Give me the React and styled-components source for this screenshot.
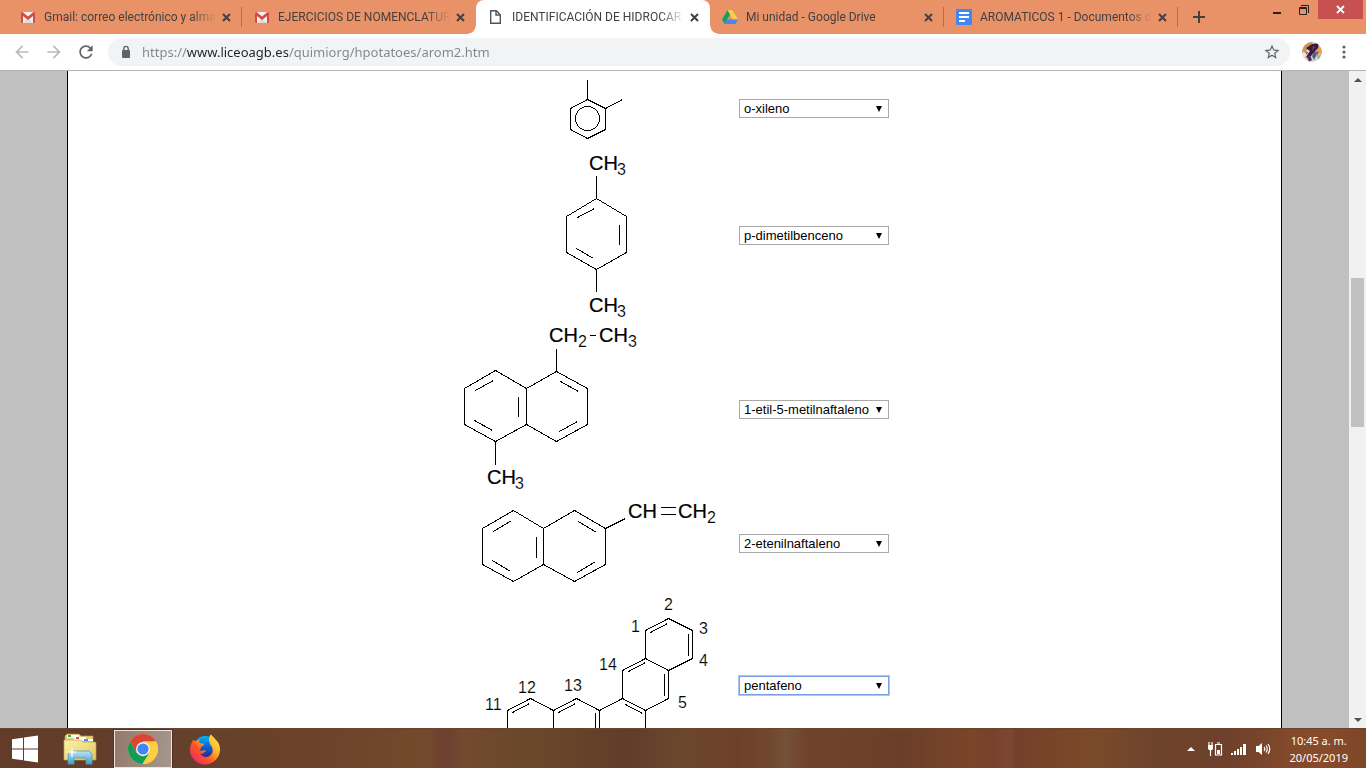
import React from "react";
import styled, { createGlobalStyle, css } from "styled-components";

const UI_FONT = '"Noto Sans", "Open Sans", sans-serif';
const TAB_FONT = 'Roboto, "Noto Sans", sans-serif';
const PAGE_FONT = '"Liberation Sans", Arial, sans-serif';

const GlobalStyle = createGlobalStyle`
  *, *::before, *::after { box-sizing: border-box; }
  body { margin: 0; background: #fff; font-family: ${PAGE_FONT}; }
  button { border: 0; padding: 0; margin: 0; background: none; color: inherit; font: inherit; cursor: pointer; }
  svg { display: block; flex: none; }
`;

const Screen = styled.div`
  display: flex;
  flex-direction: column;
  height: 100vh;
  overflow: hidden;
`;

/* ---------- tab strip ---------- */

const TabStrip = styled.header`
  display: flex;
  flex: none;
  height: 34px;
  padding-left: 8px;
  background: #e99167;
  color: #45403f;
  font: 12px/16px ${TAB_FONT};
`;

const Tab = styled.div`
  display: flex;
  align-items: center;
  flex: 0 1 234px;
  min-width: 0;
  height: 34px;
  padding: 0 8px 0 12px;
  ${(p) =>
    p.$divider &&
    css`
      background: linear-gradient(#a9705a, #a9705a) right center / 1px 20px no-repeat;
    `}
  ${(p) =>
    p.$active &&
    css`
      position: relative;
      background: #fff;
      border-radius: 8px 8px 0 0;
      &::before,
      &::after {
        content: "";
        position: absolute;
        bottom: 0;
        width: 8px;
        height: 8px;
      }
      &::before {
        left: -8px;
        background: radial-gradient(circle at 0 0, transparent 7px, #fff 8px);
      }
      &::after {
        right: -8px;
        background: radial-gradient(circle at 100% 0, transparent 7px, #fff 8px);
      }
    `}
`;

const TabButton = styled.button`
  display: flex;
  align-items: center;
  gap: 8px;
  flex: 1;
  min-width: 0;
  text-align: left;
`;

const TabTitle = styled.span`
  flex: 1;
  overflow: hidden;
  white-space: nowrap;
  mask-image: linear-gradient(90deg, #000 calc(100% - 26px), transparent calc(100% - 2px));
`;

const TabClose = styled.button`
  display: grid;
  place-items: center;
  width: 16px;
  height: 16px;
`;

const NewTab = styled.button`
  display: grid;
  place-items: center;
  width: 28px;
  margin-left: 7px;
`;

const WindowControls = styled.div`
  display: flex;
  align-items: flex-start;
  gap: 1px;
  margin-left: auto;
  padding-right: 3px;
  color: #222;
`;

const WindowButton = styled.button`
  display: grid;
  place-items: center;
  width: ${(p) => (p.$close ? 45 : 26)}px;
  height: 19px;
  ${(p) => p.$close && "background: #c75050; color: #fff;"}
`;

/* ---------- toolbar ---------- */

const Toolbar = styled.nav`
  display: flex;
  align-items: center;
  flex: none;
  height: 37px;
  padding: 0 12px;
  gap: 12px;
  background: #fff;
  border-bottom: 1px solid #b4b4b4;
  color: #5f6368;
`;

const ToolButton = styled.button`
  display: grid;
  place-items: center;
  width: 20px;
  height: 20px;
  ${(p) => p.$dim && "color: #bababa;"}
`;

const AddressBar = styled.form`
  display: flex;
  align-items: center;
  flex: 1;
  height: 28px;
  padding: 0 8px 0 12px;
  gap: 10px;
  border-radius: 14px;
  background: #f1f3f4;
`;

const AddressInput = styled.input`
  flex: 1;
  min-width: 0;
  height: 24px;
  padding: 0;
  border: 0;
  outline: 0;
  font: 13px/24px ${UI_FONT};
  color: #80868b;
  background: linear-gradient(90deg, #80868b 45px, #202124 45px 146px, #80868b 146px);
  -webkit-background-clip: text;
  background-clip: text;
  -webkit-text-fill-color: transparent;
`;

/* ---------- page ---------- */

const Viewport = styled.div`
  display: flex;
  flex: 1;
  min-height: 0;
  background: #c0c0c0;
`;

const Page = styled.main`
  flex: 1;
  min-width: 0;
  margin: 0 5%;
  overflow: hidden;
  background: #fff;
  border: solid #000;
  border-width: 0 1px;
`;

const PageArea = styled.div`
  display: flex;
  flex: 1;
  min-width: 0;
`;

const Exercise = styled.table`
  width: 435px;
  margin: -4px auto 0;
  table-layout: fixed;
  border-collapse: collapse;
  td {
    padding: 0;
    vertical-align: middle;
  }
  td:first-child {
    width: 282px;
  }
`;

const Drawing = styled.svg`
  width: 282px;
  height: ${(p) => p.$height}px;
  fill: none;
  stroke: #000;
  stroke-width: 1px;
  shape-rendering: crispEdges;
  text {
    fill: #000;
    stroke: #fff;
    stroke-width: 0.15px;
    font: 16px ${PAGE_FONT};
  }
  text.atom {
    font-size: 20px;
    stroke: #000;
    stroke-width: 0.2px;
  }
`;

const SelectBox = styled.div`
  display: inline-grid;
  align-items: center;
  vertical-align: top;
  > * {
    grid-area: 1 / 1;
  }
  > svg {
    justify-self: end;
    margin-right: 7px;
    pointer-events: none;
  }
`;

const Select = styled.select`
  appearance: none;
  width: 150px;
  height: 19px;
  margin: 0;
  padding: 0 3px 0 4px;
  border: 1px solid ${(p) => (p.$focused ? "#7b9fe3" : "#a9a9a9")};
  border-radius: 0;
  outline: ${(p) => (p.$focused ? "1px solid #a9c6f7" : "0")};
  background: #fff;
  color: #000;
  font: 13px/17px ${PAGE_FONT};
`;

const ScrollBar = styled.div`
  display: flex;
  flex-direction: column;
  align-items: center;
  width: 17px;
  background: #f1f1f1;
`;

const ScrollArrow = styled.button`
  display: grid;
  place-items: center;
  width: 17px;
  height: 17px;
  color: #505050;
`;

const ScrollGap = styled.div`
  flex: ${(p) => p.$share} 0 0;
`;

const ScrollThumb = styled.div`
  flex: 149 0 0;
  width: 13px;
  background: #c1c1c1;
`;

/* ---------- taskbar ---------- */

const Taskbar = styled.footer`
  display: flex;
  align-items: center;
  flex: none;
  height: 40px;
  border-top: 1px solid #6b4430;
  color: #fff;
  background: linear-gradient(
    90deg,
    #633b29 0%,
    #65402b 14%,
    #6b4229 22%,
    #744a2c 31.4%,
    #6e4130 32.2%,
    #6e4130 33%,
    #734a2e 33.8%,
    #684729 40%,
    #603d2a 46%,
    #6b472c 50%,
    #6e402a 54%,
    #70462c 56%,
    #735038 57.6%,
    #70442b 59%,
    #6b3e29 66%,
    #7a4528 71%,
    #774229 72.5%,
    #7c4633 74%,
    #75402a 74.4%,
    #7a4a29 80%,
    #6e432c 85%,
    #6e402b 90%,
    #854a2a 95%,
    #884b2a 97%,
    #7d4528 100%
  );
`;

const TaskButton = styled.button`
  display: grid;
  place-items: center;
  width: ${(p) => p.$width}px;
  height: 38px;
  ${(p) =>
    p.$active &&
    css`
      background: linear-gradient(100deg, #95796c, #a5978e);
      border: 1px solid #ece6e2;
      outline: 1px solid #4f3226;
      margin: 0 4px;
    `}
`;

const Tray = styled.div`
  display: flex;
  align-items: center;
  gap: 8px;
  margin-left: auto;
  padding-right: 18px;
`;

const TrayButton = styled.button`
  display: grid;
  place-items: center;
  width: 16px;
  height: 20px;
`;

const Clock = styled.time`
  margin-left: 10px;
  font: 11px/17px ${UI_FONT};
  text-align: center;
`;

/* ---------- icons ---------- */

const Cross = ({ size = 9, width = 2 }) => (
  <svg width={size} height={size} viewBox="0 0 9 9">
    <path d="M1 1l7 7M8 1L1 8" stroke="currentColor" strokeWidth={width} />
  </svg>
);

const GmailIcon = () => (
  <svg width="16" height="16" viewBox="0 0 16 16">
    <rect x="1" y="3" width="14" height="11" rx="1" fill="#f2f2f2" />
    <path d="M3 14l5-5 5 5z" fill="#dcdcdc" />
    <path d="M1 4.200V13a1 1 0 001 1h1V7l5 4 5-4v7h1a1 1 0 001-1V4.200C15 3 14 3 13.500 3L8 7.500 2.500 3C2 3 1 3 1 4.200z" fill="#d54c3f" />
  </svg>
);

const FileIcon = () => (
  <svg width="16" height="16" viewBox="0 0 16 16" fill="none" stroke="#50545a" strokeWidth="1.400">
    <path d="M2.700 1.700h5.600l4 4v8.600H2.700z" fill="#fff" />
    <path d="M8 2v4h4" />
  </svg>
);

const DriveIcon = () => (
  <svg width="16" height="16" viewBox="0 0 16 16">
    <path d="M5.500 1.200h5L16 10.500h-5.200z" fill="#ffcf48" />
    <path d="M5.500 1.200L0 10.600l2.600 4.300L8 5.600z" fill="#11a05f" />
    <path d="M5.300 10.500H16l-2.600 4.400H2.600z" fill="#4587f4" />
  </svg>
);

const DocsIcon = () => (
  <svg width="16" height="16" viewBox="0 0 16 16">
    <rect width="16" height="16" rx="1.500" fill="#4285f4" />
    <path d="M3 4h10M3 8h10M3 12h6" stroke="#fff" strokeWidth="2" />
  </svg>
);

const Material = ({ d, size = 20 }) => (
  <svg width={size} height={size} viewBox="0 0 24 24" fill="currentColor">
    <path d={d} />
  </svg>
);

const BACK = "M20 11H7.830l5.590-5.590L12 4l-8 8 8 8 1.410-1.410L7.830 13H20v-2z";
const FORWARD = "M12 4l-1.410 1.410L16.170 11H4v2h12.170l-5.580 5.590L12 20l8-8z";
const RELOAD =
  "M17.650 6.350C16.200 4.900 14.210 4 12 4c-4.420 0-7.990 3.580-7.990 8s3.570 8 7.990 8c3.730 0 6.840-2.550 7.730-6h-2.080c-.82 2.330-3.040 4-5.650 4-3.310 0-6-2.690-6-6s2.690-6 6-6c1.660 0 3.140.69 4.220 1.780L13 11h7V4l-2.350 2.350z";
const STAR =
  "M22 9.240l-7.190-.62L12 2 9.190 8.630 2 9.240l5.460 4.730L5.820 21 12 17.270 18.180 21l-1.630-7.030L22 9.240zM12 15.400l-3.760 2.270 1-4.280-3.320-2.880 4.380-.38L12 6.100l1.710 4.040 4.380.38-3.320 2.880 1 4.280L12 15.400z";

const LockIcon = () => (
  <svg width="12" height="14" viewBox="0 0 12 14">
    <rect x="2" y="5" width="8" height="8" rx="1" fill="#5f6368" />
    <path d="M3.800 5.500V3.600a2.200 2.200 0 014.400 0v1.900" fill="none" stroke="#5f6368" strokeWidth="1.400" />
  </svg>
);

const Avatar = () => (
  <svg width="20" height="20" viewBox="0 0 20 20">
    <defs>
      <clipPath id="avatar">
        <circle cx="10" cy="10" r="10" />
      </clipPath>
    </defs>
    <g clipPath="url(#avatar)">
      <path d="M0 0h20v20H0z" fill="#ddd0d3" />
      <path d="M0 0h11L6 8 0 11z" fill="#c79a51" />
      <path d="M14 3l6 3v6l-5-1z" fill="#d9a94f" />
      <path d="M10 2l7-1-1 5-7 8-3 2-2-1 4-6-4-3z" fill="#3b1a3d" />
      <path d="M1 10l6-2-2 5-4 2z" fill="#e9e3ee" />
      <path d="M2 9l4 1-1 3z" fill="#d2484c" />
      <path d="M10 14l3-5 2 3-3 6z" fill="#40617f" />
      <path d="M14 9l3 1-2 4z" fill="#cf3f44" />
      <path d="M5 15l3-2 2 5-3 2z" fill="#54315d" />
      <path d="M11 4l2 1-3 4z" fill="#7b3f78" />
      <path d="M15 14l4-2-2 6z" fill="#8db79f" />
    </g>
  </svg>
);

const Dots = () => (
  <svg width="4" height="16" viewBox="0 0 4 16" fill="#5f6368">
    <circle cx="2" cy="3" r="1.600" />
    <circle cx="2" cy="8" r="1.600" />
    <circle cx="2" cy="13" r="1.600" />
  </svg>
);

const ArrowHead = ({ up }) => (
  <svg width="8" height="4" viewBox="0 0 8 4" fill="currentColor">
    <path d={up ? "M0 4L4 0l4 4z" : "M0 0h8L4 4z"} />
  </svg>
);

const WindowsIcon = () => (
  <svg width="28" height="28" viewBox="0 0 28 28" fill="#fff">
    <path d="M1 4.300l11-1.500v10.700H1zM13 2.600L27 .6v12.900H13zM1 14.500h11v10.700L1 23.700zM13 14.500h14v12.900l-14-2z" />
  </svg>
);

const ExplorerIcon = () => (
  <svg width="34" height="32" viewBox="0 0 34 32">
    <defs>
      <linearGradient id="folder" x1="0" y1="0" x2="1" y2="1">
        <stop offset="0" stopColor="#fbf2b5" />
        <stop offset="1" stopColor="#e4c754" />
      </linearGradient>
      <linearGradient id="stand" x1="0" y1="0" x2="0" y2="1">
        <stop offset="0" stopColor="#bfe5f3" />
        <stop offset="1" stopColor="#3b9fc9" />
      </linearGradient>
    </defs>
    <path d="M2 3l2-2h12l2 2h12v6H2z" fill="#e6cf83" stroke="#b69a4c" strokeWidth=".6" />
    <path d="M4 2h12v3H4z" fill="#fff" />
    <path d="M5 2h3v2H5z" fill="#28b33c" />
    <path d="M11 4h12v4H11z" fill="#fff" />
    <path d="M13 4h3v2h-3z" fill="#e05335" />
    <path d="M1 7h17l2 2h12l1 1v17H1z" fill="url(#folder)" stroke="#c0a045" strokeWidth=".7" />
    <path d="M20 6h10v2H20z" fill="#fff" />
    <path d="M21 6h4v2h-4z" fill="#3d9ae0" />
    <path d="M5 31V21l3-3h18l3 3v10h-6v-6H11v6z" fill="url(#stand)" stroke="#4a9fbf" strokeWidth=".8" />
    <path d="M9 13l1 5 5 1-5 1-1 6-1-6-5-1 5-1z" fill="#fff" opacity=".9" />
  </svg>
);

const ChromeIcon = () => (
  <svg width="30" height="30" viewBox="0 0 30 30">
    <circle cx="15" cy="15" r="15" fill="#ffcd40" />
    <path d="M2 7.500A15 15 0 0128 7.500H15L8.500 18.700z" fill="#db4437" />
    <path d="M2 7.500A15 15 0 0014.500 30L21.500 18.800 15 22.500 8.500 18.700z" fill="#0f9d58" />
    <path d="M15 7.500h13A15 15 0 0114.500 30l7-11.300z" fill="#ffcd40" />
    <circle cx="15" cy="15" r="7" fill="#f1f1f1" />
    <circle cx="15" cy="15" r="5.600" fill="#4285f4" />
  </svg>
);

const FirefoxIcon = () => (
  <svg width="32" height="32" viewBox="0 0 32 32">
    <defs>
      <linearGradient id="fox" x1="1" y1="0" x2="0" y2="1">
        <stop offset="0" stopColor="#fff44f" />
        <stop offset=".35" stopColor="#ffb429" />
        <stop offset=".6" stopColor="#ff5722" />
        <stop offset="1" stopColor="#e31587" />
      </linearGradient>
      <linearGradient id="globe" x1="0" y1="0" x2="0" y2="1">
        <stop offset="0" stopColor="#00b7f5" />
        <stop offset=".5" stopColor="#0a62d0" />
        <stop offset="1" stopColor="#30208f" />
      </linearGradient>
    </defs>
    <circle cx="16" cy="14" r="11" fill="url(#globe)" />
    <path
      d="M4.500 6.500C5 8 6 8.300 7 8c2-1.500 4-1.300 4-1.300-1 1-1 2-.5 3 1 .8 3.500.3 4.500 1.300-.3 2-2.500 2-3 3 .3 1.600-.5 2.500-2 3 2 1.500 4 .3 6 .3 1.500.2 1 1.200 0 1.500-1.500 1.700-3.500 2.400-5 1.800 2 3.200 6.500 4.400 9.500 2.400 4.500-3 3.500-8 1.500-10.500-2-2.500-3-7-.5-11C24 3 25 5 26.500 6.500 29 8.500 31 12 31 16a15 15 0 01-30 1C.700 13 2.500 9.500 4.500 6.500z"
      fill="url(#fox)"
    />
  </svg>
);

const BatteryIcon = () => (
  <svg width="16" height="16" viewBox="0 0 16 16" fill="none" stroke="#fff">
    <path d="M2 1v3M5 1v3M3.500 8v7" strokeWidth="1.200" />
    <path d="M1 4h5v4L5 9H2L1 8z" fill="#fff" stroke="none" />
    <path d="M8.500 3.500h6v10.500h-6zM10 2h3" strokeWidth="1.200" />
    <path d="M10 9h3v4h-3z" fill="#fff" stroke="none" />
  </svg>
);

const SignalIcon = () => (
  <svg width="16" height="14" viewBox="0 0 16 14" fill="#fff">
    <path d="M0 11h2v2H0zM3 9h2v4H3zM6 7h2v6H6zM9 5h2v8H9zM12 2h3v11h-3z" />
  </svg>
);

const SpeakerIcon = () => (
  <svg width="16" height="16" viewBox="0 0 16 16" fill="none" stroke="#fff">
    <path d="M1 5h2.500L7 2v12l-3.500-3H1z" fill="#fff" stroke="none" />
    <path d="M9 6q1.500 2 0 4M11 4.500q2.500 3.500 0 7M13 3q3.500 5 0 10" strokeWidth="1.200" />
  </svg>
);

/* ---------- molecules ---------- */

const Xylene = () => (
  <g transform="translate(.5 .5)">
    <path d="M130 12v20l18 9v21l-18 9-17-9V41l17-9M148 41l17-9" />
    <circle cx="130" cy="51" r="12" />
  </g>
);

const DimethylBenzene = () => (
  <>
    <g transform="translate(.5 .5)">
      <path d="M139 25v23l30 18v36l-30 17-30-17V66l30-18M139 119v22" />
      <path d="M120 67l17-9M162 74v20M119 98l17 10" />
    </g>
    <text className="atom" x="132" y="20">CH</text>
    <text x="160" y="25">3</text>
    <text className="atom" x="132" y="162">CH</text>
    <text x="160" y="167">3</text>
  </>
);

const EthylMethylNaphthalene = () => (
  <>
    <g transform="translate(.5 .5)">
      <path d="M38 49l31 18v36l-31 17-31-17V67zM69 67l30-17 31 17v36l-31 17-30-17M99 27v23M38 120v23M132 14h6" />
      <path d="M18 69l18-10M61 75v20M17 99l18 10M103 60l18 10M102 110l18-10" />
    </g>
    <text className="atom" x="92" y="21">CH</text>
    <text x="121" y="26">2</text>
    <text className="atom" x="142" y="21">CH</text>
    <text x="171" y="26">3</text>
    <text className="atom" x="30" y="163">CH</text>
    <text x="58" y="168">3</text>
  </>
);

const EthenylNaphthalene = () => (
  <>
    <g transform="translate(.5 .5)">
      <path d="M56 12l30 18v36l-30 17-31-17V30zM86 30l31-18 31 18v36l-31 17-31-17M148 30l20-10M203 9h15M203 16h15" />
      <path d="M36 33l18-11M79 38v21M35 62l18 11M121 23l18 11M120 74l18-11" />
    </g>
    <text className="atom" x="171" y="20">CH</text>
    <text className="atom" x="221" y="20">CH</text>
    <text x="250" y="25">2</text>
  </>
);

const Pentaphene = () => (
  <>
    <g transform="translate(.5 .5)">
      <path d="M188 41l23-12 24 12v28l-24 12-23-12zM188 69l-23 12v28l23 12 23-12V81M165 109l-23 12v28M188 121v28M142 121l-23-12-23 12v28M96 121l-23-12-23 12v28" />
      <path d="M193 43l17-9M231 44v22M171 82l17-9M207 84v22M168 115l17 9M138 123v26M101 123l17-9M55 123l17-9" />
    </g>
    <text x="207" y="21">2</text>
    <text x="174" y="43">1</text>
    <text x="242" y="45">3</text>
    <text x="242" y="77">4</text>
    <text x="142" y="81">14</text>
    <text x="221" y="119">5</text>
    <text x="107" y="102">13</text>
    <text x="61" y="104">12</text>
    <text x="28" y="121">11</text>
  </>
);

const TABS = [
  { title: "Gmail: correo electrónico y alma", icon: GmailIcon, divider: true },
  { title: "EJERCICIOS DE NOMENCLATUR", icon: GmailIcon },
  { title: "IDENTIFICACIÓN DE HIDROCAR", icon: FileIcon, active: true },
  { title: "Mi unidad - Google Drive", icon: DriveIcon, divider: true },
  { title: "AROMATICOS 1 - Documentos d", icon: DocsIcon, divider: true },
];

const QUESTIONS = [
  { answer: "o-xileno", height: 83, drawing: Xylene },
  { answer: "p-dimetilbenceno", height: 171, drawing: DimethylBenzene },
  { answer: "1-etil-5-metilnaftaleno", height: 177, drawing: EthylMethylNaphthalene },
  { answer: "2-etenilnaftaleno", height: 91, drawing: EthenylNaphthalene },
  { answer: "pentafeno", height: 193, drawing: Pentaphene, focused: true },
];

export default function App() {
  return (
    <Screen>
      <GlobalStyle />
      <TabStrip>
        {TABS.map(({ title, icon: Icon, active, divider }) => (
          <Tab key={title} $active={active} $divider={divider}>
            <TabButton>
              <Icon />
              <TabTitle>{title}</TabTitle>
            </TabButton>
            <TabClose aria-label="Cerrar pestaña">
              <Cross />
            </TabClose>
          </Tab>
        ))}
        <NewTab aria-label="Nueva pestaña">
          <svg width="12" height="12" viewBox="0 0 12 12">
            <path d="M6 0v12M0 6h12" stroke="currentColor" strokeWidth="2" />
          </svg>
        </NewTab>
        <WindowControls>
          <WindowButton aria-label="Minimizar">
            <svg width="8" height="8" viewBox="0 0 8 8">
              <path d="M0 7h8" stroke="currentColor" strokeWidth="2" />
            </svg>
          </WindowButton>
          <WindowButton aria-label="Restaurar">
            <svg width="10" height="10" viewBox="0 0 10 10" fill="none" stroke="currentColor">
              <path d="M.5 2.500h7v7h-7zM0 3.500h8M2 .5h7.500V8" />
            </svg>
          </WindowButton>
          <WindowButton $close aria-label="Cerrar">
            <Cross size={9} width={1.8} />
          </WindowButton>
        </WindowControls>
      </TabStrip>

      <Toolbar>
        <ToolButton $dim aria-label="Atrás"><Material d={BACK} /></ToolButton>
        <ToolButton $dim aria-label="Adelante"><Material d={FORWARD} /></ToolButton>
        <ToolButton aria-label="Recargar"><Material d={RELOAD} /></ToolButton>
        <AddressBar>
          <LockIcon />
          <AddressInput aria-label="Dirección" defaultValue="https://www.liceoagb.es/quimiorg/hpotatoes/arom2.htm" />
          <ToolButton type="button" aria-label="Favorito"><Material d={STAR} size={18} /></ToolButton>
        </AddressBar>
        <ToolButton aria-label="Perfil"><Avatar /></ToolButton>
        <ToolButton aria-label="Menú"><Dots /></ToolButton>
      </Toolbar>

      <Viewport>
        <PageArea>
          <Page>
            <Exercise>
              <tbody>
                {QUESTIONS.map(({ answer, height, drawing: Molecule, focused }) => (
                  <tr key={answer}>
                    <td>
                      <Drawing $height={height} viewBox={`0 0 282 ${height}`} role="img">
                        <Molecule />
                      </Drawing>
                    </td>
                    <td>
                      <SelectBox>
                        <Select aria-label="Nombre del compuesto" defaultValue={answer} $focused={focused}>
                          {QUESTIONS.map((q) => (
                            <option key={q.answer}>{q.answer}</option>
                          ))}
                        </Select>
                        <svg width="6" height="6" viewBox="0 0 6 6">
                          <path d="M0 0h6L3 6z" />
                        </svg>
                      </SelectBox>
                    </td>
                  </tr>
                ))}
              </tbody>
            </Exercise>
          </Page>
        </PageArea>
        <ScrollBar>
          <ScrollArrow aria-label="Subir"><ArrowHead up /></ScrollArrow>
          <ScrollGap $share={190} />
          <ScrollThumb />
          <ScrollGap $share={284} />
          <ScrollArrow aria-label="Bajar"><ArrowHead /></ScrollArrow>
        </ScrollBar>
      </Viewport>

      <Taskbar>
        <TaskButton $width={50} aria-label="Inicio"><WindowsIcon /></TaskButton>
        <TaskButton $width={60} aria-label="Explorador de archivos"><ExplorerIcon /></TaskButton>
        <TaskButton $width={58} $active aria-label="Google Chrome"><ChromeIcon /></TaskButton>
        <TaskButton $width={58} aria-label="Firefox"><FirefoxIcon /></TaskButton>
        <Tray>
          <TrayButton aria-label="Mostrar iconos ocultos"><ArrowHead up /></TrayButton>
          <TrayButton aria-label="Batería"><BatteryIcon /></TrayButton>
          <TrayButton aria-label="Red"><SignalIcon /></TrayButton>
          <TrayButton aria-label="Volumen"><SpeakerIcon /></TrayButton>
          <Clock>
            10:45 a. m.
            <br />
            20/05/2019
          </Clock>
        </Tray>
      </Taskbar>
    </Screen>
  );
}
